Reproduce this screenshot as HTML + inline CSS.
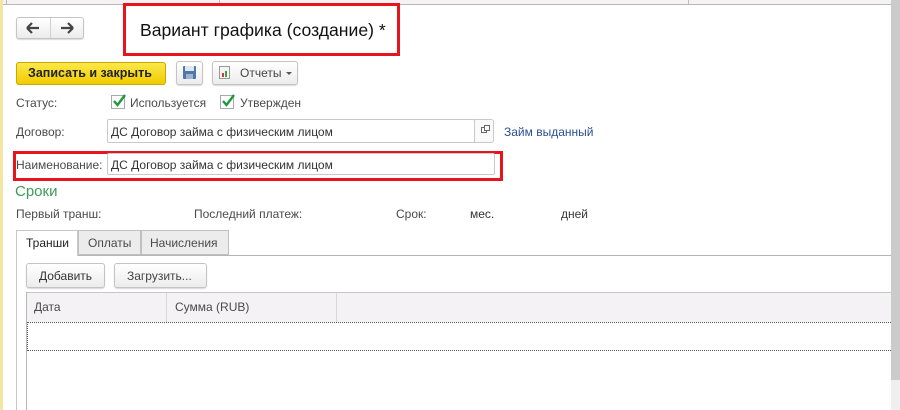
<!DOCTYPE html>
<html><head><meta charset="utf-8"><style>
*{box-sizing:border-box;margin:0;padding:0}
body{width:900px;height:410px;background:#fff;position:relative;overflow:hidden;font-family:"Liberation Sans","Noto Sans CJK SC",sans-serif;font-size:12px;color:#4a4a4a}
.a{position:absolute}
.btn{position:absolute;border:1px solid #c4c4c4;border-radius:3px;background:linear-gradient(#fff,#ececec);box-shadow:0 1px 1px rgba(0,0,0,.15)}
.t{position:absolute;white-space:nowrap}
.inp{position:absolute;border:1px solid #c9c9c9;border-radius:2px;background:#fff;color:#333;padding:4px 0 0 3px;font-size:12px}
.cb{position:absolute;width:14px;height:14px;border:1px solid #a9a9a9;background:#fff}
</style></head><body>
<div class="a" style="left:0;top:0;width:891px;height:5px;background:#f5f1f5;border-bottom:1px solid #b8b8b8"></div>
<div class="a" style="left:6px;top:0;width:1px;height:5px;background:#bbb"></div>
<div class="a" style="left:219px;top:0;width:1px;height:5px;background:#bbb"></div>
<div class="a" style="left:688px;top:0;width:1px;height:5px;background:#bbb"></div>
<div class="a" style="left:0;top:0;width:3px;height:410px;background:#f3e6a0"></div>
<div class="a" style="left:891px;top:0;width:9px;height:380px;background:#cbcbcb"></div>
<div class="a" style="left:891px;top:380px;width:9px;height:30px;background:#efefef"></div>

<div class="btn" style="left:16px;top:17px;width:68px;height:22px"></div>
<div class="a" style="left:50px;top:18px;width:1px;height:20px;background:#d0d0d0"></div>
<svg class="a" style="left:26px;top:22px" width="14" height="12"><path d="M1 6H13M1 6L6 1M1 6L6 11" stroke="#444" stroke-width="2.2" fill="none"/></svg>
<svg class="a" style="left:60px;top:22px" width="14" height="12"><path d="M13 6H1M13 6L8 1M13 6L8 11" stroke="#444" stroke-width="2.2" fill="none"/></svg>

<div class="a" style="left:123px;top:3px;width:277px;height:53px;border:3px solid #e8141c"></div>
<div class="t" style="left:140px;top:20px;font-size:17.6px;color:#111">Вариант графика (создание) *</div>

<div class="a" style="left:16px;top:62px;width:150px;height:23px;border:1px solid #c9a800;border-radius:3px;background:linear-gradient(#fbe84a,#f2cc00)"></div>
<div class="t" style="left:28px;top:66px;font-size:12.5px;font-weight:bold;color:#222">Записать и закрыть</div>
<div class="btn" style="left:176px;top:61px;width:27px;height:24px"></div>
<div class="a" style="left:183px;top:66px;width:13px;height:13px;background:#4e78a8;border-radius:1px"></div>
<div class="a" style="left:185px;top:66px;width:9px;height:5px;background:#dfe8f2"></div>
<div class="a" style="left:186px;top:74px;width:7px;height:5px;background:#9cb4cf"></div>
<div class="btn" style="left:212px;top:61px;width:86px;height:24px"></div>
<div class="a" style="left:219px;top:66px;width:11px;height:13px;border:1px solid #999;background:#f4f4f4"></div>
<div class="a" style="left:222px;top:73px;width:2px;height:4px;background:#d33"></div>
<div class="a" style="left:225px;top:71px;width:2px;height:6px;background:#3a3"></div>
<div class="t" style="left:240px;top:66px;color:#444">Отчеты</div>
<svg class="a" style="left:286px;top:72px" width="6" height="4"><path d="M0 0H6L3 3Z" fill="#555"/></svg>

<div class="t" style="left:16px;top:96px">Статус:</div>
<div class="cb" style="left:111px;top:95px"></div>
<svg class="a" style="left:111px;top:93px" width="16" height="16"><path d="M3 8L6.5 12L14 2" stroke="#1a9a3a" stroke-width="2.4" fill="none"/></svg>
<div class="t" style="left:130px;top:96px">Используется</div>
<div class="cb" style="left:220px;top:95px"></div>
<svg class="a" style="left:220px;top:93px" width="16" height="16"><path d="M3 8L6.5 12L14 2" stroke="#1a9a3a" stroke-width="2.4" fill="none"/></svg>
<div class="t" style="left:240px;top:96px">Утвержден</div>

<div class="t" style="left:16px;top:125px">Договор:</div>
<div class="inp" style="left:107px;top:119px;width:368px;height:24px;padding-top:5px">ДС Договор займа с физическим лицом</div>
<div class="a" style="left:474px;top:119px;width:20px;height:24px;border:1px solid #c9c9c9;border-radius:0 3px 3px 0;background:#fafafa"></div>
<div class="a" style="left:481px;top:127px;width:6px;height:6px;border:1px solid #666"></div>
<div class="a" style="left:484px;top:125px;width:6px;height:6px;border:1px solid #666;background:#fafafa"></div>
<div class="t" style="left:504px;top:125px;color:#2a4f8f">Займ выданный</div>

<div class="a" style="left:13px;top:151px;width:490px;height:30px;border:3px solid #e8141c"></div>
<div class="t" style="left:16px;top:158px">Наименование:</div>
<div class="inp" style="left:107px;top:153px;width:388px;height:22px;padding-top:4px">ДС Договор займа с физическим лицом</div>

<div class="t" style="left:15px;top:183px;font-size:15px;color:#3c9a5a">Сроки</div>
<div class="t" style="left:16px;top:207px">Первый транш:</div>
<div class="t" style="left:194px;top:207px">Последний платеж:</div>
<div class="t" style="left:396px;top:207px">Срок:</div>
<div class="t" style="left:470px;top:207px;color:#333">мес.</div>
<div class="t" style="left:561px;top:207px;color:#333">дней</div>

<div class="a" style="left:16px;top:255px;width:875px;height:1px;background:#b5b5b5"></div>
<div class="a" style="left:16px;top:230px;width:1px;height:180px;background:#c8c8c8"></div>
<div class="a" style="left:16px;top:230px;width:62px;height:26px;border:1px solid #c8c8c8;border-bottom:none;background:#fff"></div>
<div class="t" style="left:26px;top:236px;color:#222">Транши</div>
<div class="a" style="left:78px;top:230px;width:63px;height:25px;border:1px solid #c0c0c0;background:#ececec"></div>
<div class="t" style="left:88px;top:236px">Оплаты</div>
<div class="a" style="left:141px;top:230px;width:88px;height:25px;border:1px solid #c0c0c0;background:#ececec"></div>
<div class="t" style="left:150px;top:236px">Начисления</div>

<div class="btn" style="left:26px;top:263px;width:79px;height:25px"></div>
<div class="t" style="left:39px;top:269px;color:#333">Добавить</div>
<div class="btn" style="left:114px;top:263px;width:93px;height:25px"></div>
<div class="t" style="left:127px;top:269px;color:#444">Загрузить...</div>

<div class="a" style="left:26px;top:292px;width:865px;height:30px;background:#f4f2f4;border-top:1px solid #c6c6c6"></div>
<div class="a" style="left:26px;top:292px;width:1px;height:118px;background:#b8b8b8"></div>
<div class="a" style="left:166px;top:293px;width:1px;height:29px;background:#d8d8d8"></div>
<div class="a" style="left:336px;top:293px;width:1px;height:29px;background:#d8d8d8"></div>
<div class="t" style="left:34px;top:300px">Дата</div>
<div class="t" style="left:175px;top:300px">Сумма (RUB)</div>
<div class="a" style="left:27px;top:322px;width:864px;height:0;border-top:1px dotted #555"></div>
<div class="a" style="left:27px;top:350px;width:864px;height:0;border-top:1px dotted #555"></div>
<div class="a" style="left:27px;top:322px;width:0;height:29px;border-left:1px dotted #555"></div>
</body></html>
